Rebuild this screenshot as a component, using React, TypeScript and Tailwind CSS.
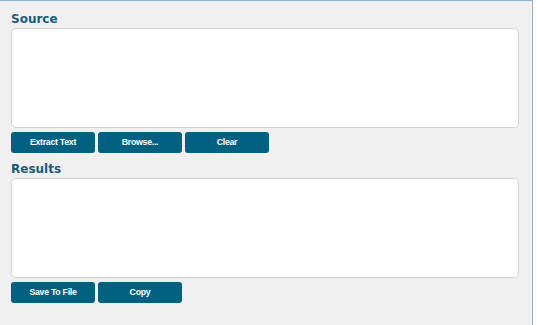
export default function App() {
  const btn =
    "w-[84px] h-[21px] rounded-[3px] bg-[#00607f] text-white text-[8.8px] tracking-[-0.3px] font-bold flex items-center justify-center";
  return (
    <div className="w-[537px] h-[325px] bg-white" style={{ fontFamily: "'DejaVu Sans', Verdana, sans-serif" }}>
      <div className="w-[533px] h-[325px] bg-[#f0f0f0] border-t border-r border-[#8db3cf] pl-[11px] pr-[13px] pt-[11px]">
        <h2 className="text-[12px] leading-[14px] font-bold text-[#185c7a]">Source</h2>
        <div className="mt-[2px] h-[100px] bg-white border border-[#d2d2d2] rounded-[5px]"></div>
        <div className="mt-[4px] flex gap-[3px]" style={{ fontFamily: "'Liberation Sans', Arial, sans-serif" }}>
          <button className={btn}>Extract Text</button>
          <button className={btn}>Browse...</button>
          <button className={btn}>Clear</button>
        </div>
        <h2 className="mt-[9px] text-[12px] leading-[14px] font-bold text-[#185c7a]">Results</h2>
        <div className="mt-[2px] h-[100px] bg-white border border-[#d2d2d2] rounded-[5px]"></div>
        <div className="mt-[4px] flex gap-[3px]" style={{ fontFamily: "'Liberation Sans', Arial, sans-serif" }}>
          <button className={btn}>Save To File</button>
          <button className={btn}>Copy</button>
        </div>
      </div>
    </div>
  );
}
